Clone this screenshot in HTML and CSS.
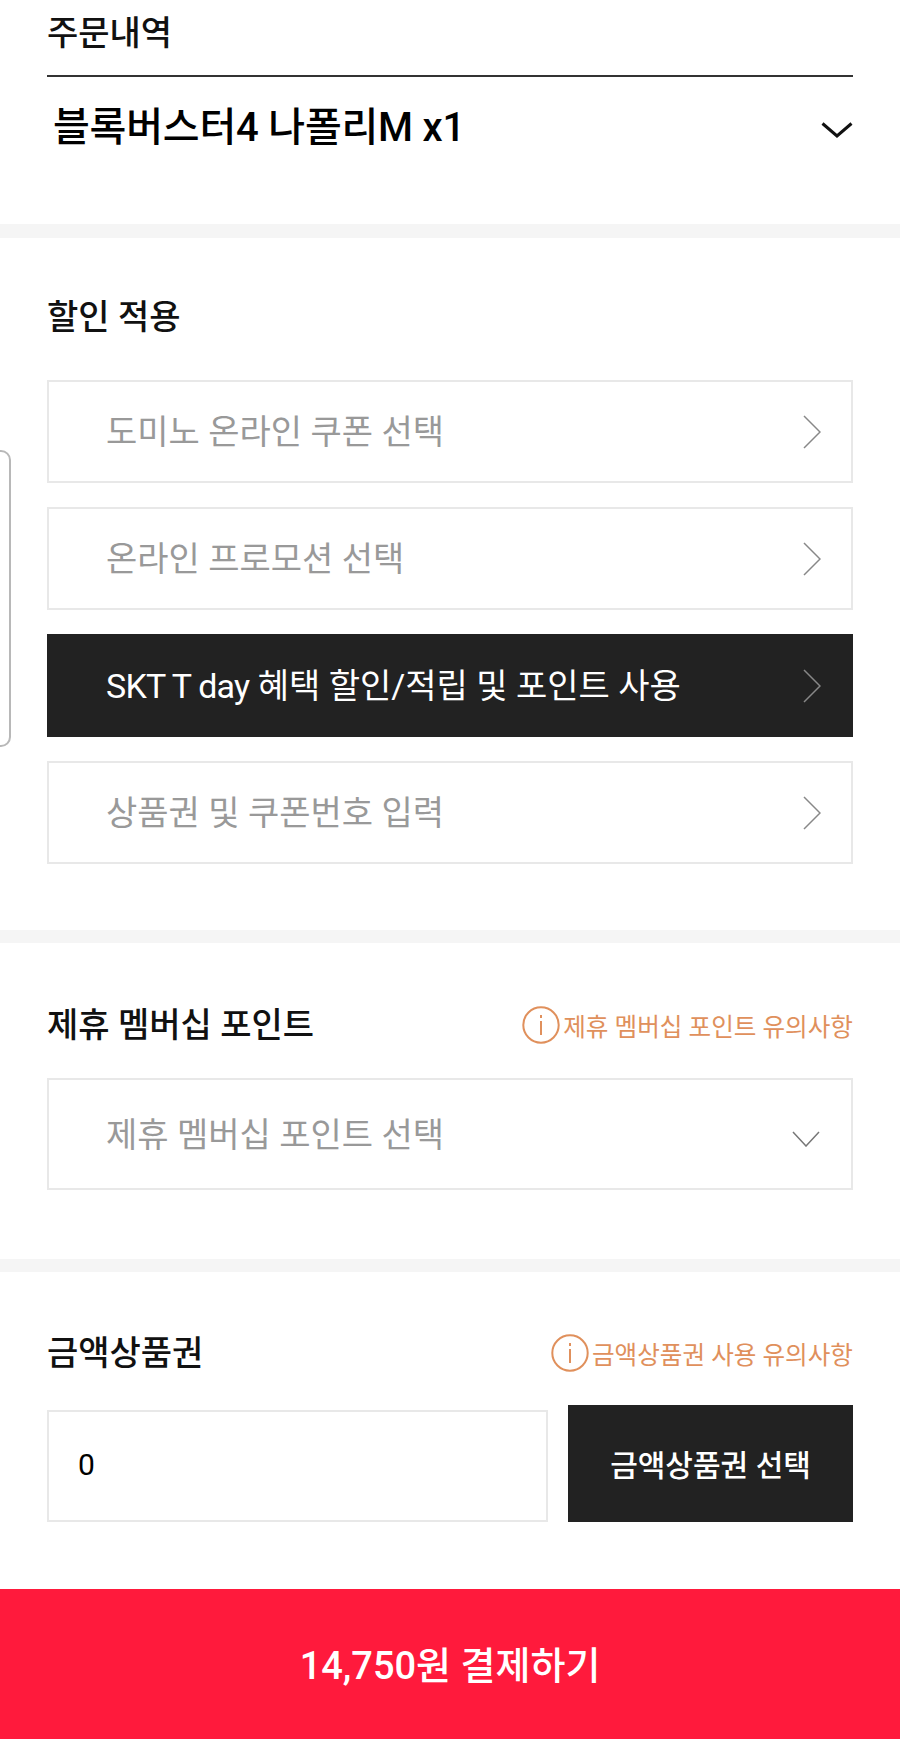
FILE: index.html
```html
<!DOCTYPE html>
<html lang="ko">
<head>
<meta charset="utf-8">
<title>주문</title>
<link rel="stylesheet" href="styles.css">
</head>
<body>
<div class="page">
  <div class="side-tab"></div>
  <section class="order">
    <h2 class="order-title">주문내역</h2>
    <div class="order-row">
      <span class="order-name">블록버스터4 나폴리M x1</span>
      <svg class="chev-strong" viewBox="0 0 32 16" aria-hidden="true"><path d="M1.5 1.5 16 14 30.5 1.5"/></svg>
    </div>
  </section>
  <section class="block discount">
    <h2 class="block-title">할인 적용</h2>
    <div class="options">
      <a class="option"><span class="label">도미노 온라인 쿠폰 선택</span><svg class="chev-right" viewBox="0 0 18 34" aria-hidden="true"><path d="M1 1 17 17 1 33"/></svg></a>
      <a class="option"><span class="label">온라인 프로모션 선택</span><svg class="chev-right" viewBox="0 0 18 34" aria-hidden="true"><path d="M1 1 17 17 1 33"/></svg></a>
      <a class="option option-dark"><span class="label"><span class="latin">SKT T day</span> 혜택 할인/적립 및 포인트 사용</span><svg class="chev-right" viewBox="0 0 18 34" aria-hidden="true"><path d="M1 1 17 17 1 33"/></svg></a>
      <a class="option"><span class="label">상품권 및 쿠폰번호 입력</span><svg class="chev-right" viewBox="0 0 18 34" aria-hidden="true"><path d="M1 1 17 17 1 33"/></svg></a>
    </div>
  </section>
  <section class="block member">
    <div class="block-head">
      <h2 class="block-title">제휴 멤버십 포인트</h2>
      <a class="notice"><svg class="info" viewBox="0 0 38 38" aria-hidden="true"><circle cx="19" cy="19" r="17.7"/><path d="M19 15V29M19 9V12"/></svg><span>제휴 멤버십 포인트 유의사항</span></a>
    </div>
    <div class="select"><span class="label">제휴 멤버십 포인트 선택</span><svg class="chev-down" viewBox="0 0 28 16" aria-hidden="true"><path d="M1 1 14 15 27 1"/></svg></div>
  </section>
  <section class="block voucher">
    <div class="block-head">
      <h2 class="block-title">금액상품권</h2>
      <a class="notice"><svg class="info" viewBox="0 0 38 38" aria-hidden="true"><circle cx="19" cy="19" r="17.7"/><path d="M19 15V29M19 9V12"/></svg><span>금액상품권 사용 유의사항</span></a>
    </div>
    <div class="voucher-row">
      <div class="amount"><span class="label">0</span></div>
      <a class="voucher-btn"><span class="btn-label">금액상품권 선택</span></a>
    </div>
  </section>
  <a class="pay">14,750원 결제하기</a>
</div>
</body>
</html>
```
FILE: styles.css
```css
* { box-sizing: border-box; }
html, body { margin: 0; padding: 0; background: #fff; }
body { font-family: Roboto, "Noto Sans CJK KR", sans-serif; color: #111; }
.page { position: relative; width: 900px; height: 1739px; display: flex; flex-direction: column; overflow: hidden; }
h2 { margin: 0; }

.side-tab { position: absolute; left: -20px; top: 450px; width: 31px; height: 297px; border: 2px solid #b8b8b8; border-radius: 10px; }

.order { height: 238px; padding: 0 47px; border-bottom: 14px solid #f5f5f5; }
.order-title { height: 77px; padding-bottom: 11px; border-bottom: 2px solid #333; font-size: 34px; line-height: 66px; font-weight: 500; }
.order-row { height: 98px; padding: 0 0 0 6px; display: flex; align-items: center; justify-content: space-between; }
.order-name { margin-bottom: 4px; font-size: 40px; font-weight: 500; letter-spacing: -0.2px; color: #000; }
.chev-strong { width: 32px; height: 16px; margin-top: 7px; fill: none; stroke: #111; stroke-width: 3; }

.block { padding: 0 47px; }
.block-title { font-size: 34px; line-height: 46px; font-weight: 500; color: #111; }

.discount { height: 705px; padding-top: 56px; border-bottom: 13px solid #f5f5f5; }
.options { margin-top: 40px; display: grid; gap: 24px; }
.option { height: 103px; padding: 0 30px 0 57px; display: flex; align-items: center; justify-content: space-between; border: 2px solid #e8e8e8; font-size: 34px; color: #999; }
.label { margin-bottom: 4px; }
.latin { letter-spacing: -0.8px; }
.option-dark { background: #222; border-color: #222; color: #fff; }
.chev-right { width: 18px; height: 34px; fill: none; stroke: #888; stroke-width: 1.5; }

.member { height: 329px; padding-top: 59px; border-bottom: 13px solid #f5f5f5; }
.block-head { display: flex; align-items: center; justify-content: space-between; height: 46px; }
.notice { display: flex; align-items: center; gap: 3px; font-size: 24.6px; color: #e0905c; }
.info { width: 38px; height: 38px; fill: none; stroke: #e0905c; stroke-width: 2; }
.select { margin-top: 30px; height: 112px; padding: 0 31px 0 57px; display: flex; align-items: center; justify-content: space-between; border: 2px solid #e8e8e8; font-size: 34px; color: #999; }
.chev-down { width: 28px; height: 16px; margin-top: 10px; fill: none; stroke: #777; stroke-width: 1.5; }

.voucher { height: 317px; padding-top: 58px; }
.voucher-row { margin-top: 29px; display: flex; align-items: flex-end; justify-content: space-between; height: 117px; }
.amount { width: 501px; height: 112px; padding-left: 29px; display: flex; align-items: center; border: 2px solid #e8e8e8; font-size: 30px; color: #000; }
.voucher-btn { width: 285px; height: 117px; display: flex; align-items: center; justify-content: center; background: #222; color: #fff; font-size: 30px; font-weight: 500; }
.btn-label { margin-bottom: 2px; }

.pay { flex: 1; padding-bottom: 4px; display: flex; align-items: center; justify-content: center; background: #ff1a3c; color: #fff; font-size: 38px; font-weight: 500; }
```
